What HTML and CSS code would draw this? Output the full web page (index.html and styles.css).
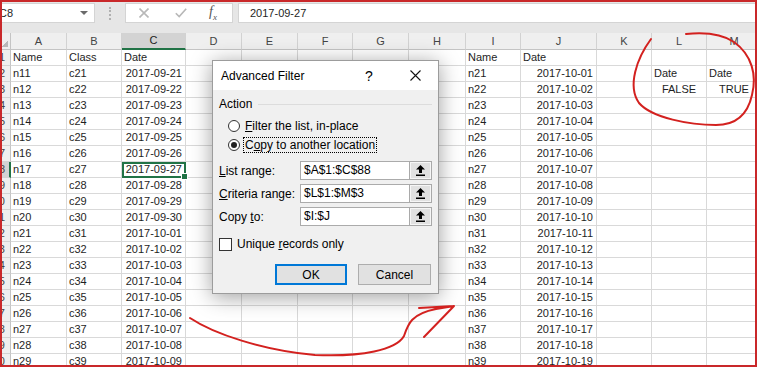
FILE: index.html
```html
<!doctype html>
<html lang="en">
<head>
<meta charset="utf-8">
<title>Advanced Filter</title>
<link rel="stylesheet" href="styles.css">
</head>
<body>
<div class="screen">

	<div class="formula-bar">
		<div class="name-box"><span class="name-text">C8</span><span class="caret"></span></div>
		<div class="grip"></div>
		<div class="fx-box">
			<svg class="fx-x" width="10" height="10" viewBox="0 0 10 10"><path d="M0.5 0.5 L9.5 9.5 M9.5 0.5 L0.5 9.5" stroke="#b8b8b8" stroke-width="1.6" fill="none"/></svg>
			<svg class="fx-ok" width="12" height="10" viewBox="0 0 12 10"><path d="M0.8 5.2 L4.2 8.6 L11.2 0.8" stroke="#b8b8b8" stroke-width="1.6" fill="none"/></svg>
			<span class="fx">f<sub>x</sub></span>
		</div>
		<div class="formula-input">2017-09-27</div>
	</div>

	<table class="sheet">
		<colgroup>
			<col class="w-rh"><col class="w-a"><col class="w-b"><col class="w-c"><col class="w-d"><col class="w-e"><col class="w-f">
			<col class="w-g"><col class="w-h"><col class="w-i"><col class="w-j"><col class="w-k"><col class="w-l"><col class="w-m">
		</colgroup>
		<tr class="col-head">
			<th class="corner"></th><th>A</th><th>B</th><th class="sel">C</th><th>D</th><th>E</th><th>F</th>
			<th>G</th><th>H</th><th>I</th><th>J</th><th>K</th><th>L</th><th>M</th>
		</tr>
		<tr><td class="rh">1</td><td>Name</td><td>Class</td><td>Date</td><td></td><td></td><td></td><td></td><td></td><td>Name</td><td>Date</td><td></td><td></td><td></td></tr>
		<tr><td class="rh">2</td><td>n11</td><td>c21</td><td class="d">2017-09-21</td><td></td><td></td><td></td><td></td><td></td><td>n21</td><td class="d">2017-10-01</td><td></td><td>Date</td><td>Date</td></tr>
		<tr><td class="rh">3</td><td>n12</td><td>c22</td><td class="d">2017-09-22</td><td></td><td></td><td></td><td></td><td></td><td>n22</td><td class="d">2017-10-02</td><td></td><td class="b">FALSE</td><td class="b">TRUE</td></tr>
		<tr><td class="rh">4</td><td>n13</td><td>c23</td><td class="d">2017-09-23</td><td></td><td></td><td></td><td></td><td></td><td>n23</td><td class="d">2017-10-03</td><td></td><td></td><td></td></tr>
		<tr><td class="rh">5</td><td>n14</td><td>c24</td><td class="d">2017-09-24</td><td></td><td></td><td></td><td></td><td></td><td>n24</td><td class="d">2017-10-04</td><td></td><td></td><td></td></tr>
		<tr><td class="rh">6</td><td>n15</td><td>c25</td><td class="d">2017-09-25</td><td></td><td></td><td></td><td></td><td></td><td>n25</td><td class="d">2017-10-05</td><td></td><td></td><td></td></tr>
		<tr><td class="rh">7</td><td>n16</td><td>c26</td><td class="d">2017-09-26</td><td></td><td></td><td></td><td></td><td></td><td>n26</td><td class="d">2017-10-06</td><td></td><td></td><td></td></tr>
		<tr><td class="rh sel">8</td><td>n17</td><td>c27</td><td class="d active">2017-09-27</td><td></td><td></td><td></td><td></td><td></td><td>n27</td><td class="d">2017-10-07</td><td></td><td></td><td></td></tr>
		<tr><td class="rh">9</td><td>n18</td><td>c28</td><td class="d">2017-09-28</td><td></td><td></td><td></td><td></td><td></td><td>n28</td><td class="d">2017-10-08</td><td></td><td></td><td></td></tr>
		<tr><td class="rh">10</td><td>n19</td><td>c29</td><td class="d">2017-09-29</td><td></td><td></td><td></td><td></td><td></td><td>n29</td><td class="d">2017-10-09</td><td></td><td></td><td></td></tr>
		<tr><td class="rh">11</td><td>n20</td><td>c30</td><td class="d">2017-09-30</td><td></td><td></td><td></td><td></td><td></td><td>n30</td><td class="d">2017-10-10</td><td></td><td></td><td></td></tr>
		<tr><td class="rh">12</td><td>n21</td><td>c31</td><td class="d">2017-10-01</td><td></td><td></td><td></td><td></td><td></td><td>n31</td><td class="d">2017-10-11</td><td></td><td></td><td></td></tr>
		<tr><td class="rh">13</td><td>n22</td><td>c32</td><td class="d">2017-10-02</td><td></td><td></td><td></td><td></td><td></td><td>n32</td><td class="d">2017-10-12</td><td></td><td></td><td></td></tr>
		<tr><td class="rh">14</td><td>n23</td><td>c33</td><td class="d">2017-10-03</td><td></td><td></td><td></td><td></td><td></td><td>n33</td><td class="d">2017-10-13</td><td></td><td></td><td></td></tr>
		<tr><td class="rh">15</td><td>n24</td><td>c34</td><td class="d">2017-10-04</td><td></td><td></td><td></td><td></td><td></td><td>n34</td><td class="d">2017-10-14</td><td></td><td></td><td></td></tr>
		<tr><td class="rh">16</td><td>n25</td><td>c35</td><td class="d">2017-10-05</td><td></td><td></td><td></td><td></td><td></td><td>n35</td><td class="d">2017-10-15</td><td></td><td></td><td></td></tr>
		<tr><td class="rh">17</td><td>n26</td><td>c36</td><td class="d">2017-10-06</td><td></td><td></td><td></td><td></td><td></td><td>n36</td><td class="d">2017-10-16</td><td></td><td></td><td></td></tr>
		<tr><td class="rh">18</td><td>n27</td><td>c37</td><td class="d">2017-10-07</td><td></td><td></td><td></td><td></td><td></td><td>n37</td><td class="d">2017-10-17</td><td></td><td></td><td></td></tr>
		<tr><td class="rh">19</td><td>n28</td><td>c38</td><td class="d">2017-10-08</td><td></td><td></td><td></td><td></td><td></td><td>n38</td><td class="d">2017-10-18</td><td></td><td></td><td></td></tr>
		<tr><td class="rh">20</td><td>n29</td><td>c39</td><td class="d">2017-10-09</td><td></td><td></td><td></td><td></td><td></td><td>n39</td><td class="d">2017-10-19</td><td></td><td></td><td></td></tr>
	</table>

	<div class="dialog">
		<div class="dlg-title">
			<span class="dlg-caption">Advanced Filter</span>
			<span class="dlg-help">?</span>
			<span class="dlg-close"><svg width="11" height="11" viewBox="0 0 11 11"><path d="M0.5 0.5 L10.5 10.5 M10.5 0.5 L0.5 10.5" stroke="#111" stroke-width="1.1" fill="none"/></svg></span>
		</div>
		<div class="dlg-body">
			<div class="group-head"><span>Action</span><span class="group-rule"></span></div>
			<div class="radio"><span class="radio-dot"></span><span><u>F</u>ilter the list, in-place</span></div>
			<div class="radio checked"><span class="radio-dot"></span><span class="focus">C<u>o</u>py to another location</span></div>

			<div class="fields">
				<div class="field">
					<span class="field-label"><u>L</u>ist range:</span>
					<span class="field-input">$A$1:$C$88</span>
					<span class="field-btn"><svg width="9" height="11" viewBox="0 0 9 11"><path d="M4.5 0 L9 4.6 H6 V8 H3 V4.6 H0 Z M0 9.4 H9 V11 H0 Z" fill="#000"/></svg></span>
				</div>
				<div class="field">
					<span class="field-label"><u>C</u>riteria range:</span>
					<span class="field-input">$L$1:$M$3</span>
					<span class="field-btn"><svg width="9" height="11" viewBox="0 0 9 11"><path d="M4.5 0 L9 4.6 H6 V8 H3 V4.6 H0 Z M0 9.4 H9 V11 H0 Z" fill="#000"/></svg></span>
				</div>
				<div class="field">
					<span class="field-label">Copy <u>t</u>o:</span>
					<span class="field-input">$I:$J</span>
					<span class="field-btn"><svg width="9" height="11" viewBox="0 0 9 11"><path d="M4.5 0 L9 4.6 H6 V8 H3 V4.6 H0 Z M0 9.4 H9 V11 H0 Z" fill="#000"/></svg></span>
				</div>
			</div>

			<div class="check"><span class="check-box"></span><span>Unique <u>r</u>ecords only</span></div>

			<div class="dlg-buttons">
				<span class="btn btn-default">OK</span>
				<span class="btn">Cancel</span>
			</div>
		</div>
	</div>

	<svg class="ink" width="757" height="367" viewBox="0 0 757 367">
		<path d="M651 39 C637 58 627 86 639 103 C652 118 690 125 716 125 C738 125 748 113 752 95 C757 75 752 55 734 42 C722 34 705 32 686 34" />
		<path d="M190 318 C214 334 262 350 315 355 C362 357 396 350 404 336 C408 324 411 314 436 309 L454 306 M419 308 L454 306 L424 337" />
	</svg>

	<div class="frame"></div>
</div>
</body>
</html>
```

FILE: styles.css
```css
* { margin: 0; padding: 0; box-sizing: border-box; }
html, body { width: 757px; height: 367px; overflow: hidden; }
body {
	font-family: "Liberation Sans", Arial, sans-serif;
	font-size: 11px;
	color: #1e1e1e;
	background: #fff;
}

.screen {
	position: relative;
	width: 757px; height: 367px;
	overflow: hidden;
}

/* formula bar */
.formula-bar {
	height: 33px;
	background: #e6e6e6;
	display: flex;
	align-items: flex-start;
	padding-top: 3px;
}
.name-box {
	width: 95px; height: 20px;
	background: #fff;
	border: 1px solid #d4d4d4;
	border-left: none;
	display: flex;
	align-items: center;
	justify-content: space-between;
	padding-right: 6px;
}
.name-text { margin-left: -1px; }
.caret {
	width: 0; height: 0;
	border-left: 4px solid transparent;
	border-right: 4px solid transparent;
	border-top: 4px solid #6a6a6a;
}
.grip {
	width: 2px; height: 13px;
	margin: 4px 14px 0 14px;
	border-left: 2px dotted #b0b0b0;
}
.fx-box {
	width: 108px; height: 20px;
	background: #fff;
	border: 1px solid #d4d4d4;
	display: flex;
	align-items: center;
	padding-left: 13px;
}
.fx-ok { margin-left: 26px; }
.fx {
	margin-left: 22px;
	font-family: "Liberation Serif", serif;
	font-style: italic;
	font-size: 14px;
	color: #555;
}
.fx sub { font-size: 9px; }
.formula-input {
	flex: 1;
	height: 20px;
	margin-left: 5px;
	background: #fff;
	border: 1px solid #d4d4d4;
	border-right: none;
	padding-left: 11px;
	line-height: 18px;
}

/* sheet */
.sheet {
	border-collapse: separate;
	border-spacing: 0;
	table-layout: fixed;
	width: 762px;
}
.w-rh { width: 11px; }
.w-a { width: 56px; }
.w-b { width: 55px; }
.w-c { width: 64px; }
.w-d { width: 56px; }
.w-e { width: 56px; }
.w-f { width: 55px; }
.w-g { width: 56px; }
.w-h { width: 57px; }
.w-i { width: 55px; }
.w-j { width: 76px; }
.w-k { width: 55px; }
.w-l { width: 55px; }
.w-m { width: 55px; }

.sheet tr { height: 16px; }
.sheet td, .sheet th {
	height: 16px;
	padding: 0 2px;
	border-right: 1px solid #d9d9d9;
	border-bottom: 1px solid #d9d9d9;
	white-space: nowrap;
	overflow: hidden;
	line-height: 15px;
	font-weight: normal;
	text-align: left;
}
.sheet td.d { text-align: right; padding-right: 3px; }
.sheet td.b { text-align: center; }

.col-head th {
	background: #efefef;
	color: #444;
	text-align: center;
	border-right-color: #d2d2d2;
	border-bottom-color: #c4c4c4;
}
.col-head th.sel {
	background: #d3d3d3;
	color: #222;
	border-bottom: 2px solid #217346;
}
.col-head th.corner {
	background: #efefef linear-gradient(135deg, transparent 50%, #b8b8b8 50%) no-repeat right 2px bottom 2px / 6px 6px;
	border-right-color: #c4c4c4;
}
.sheet td.rh {
	background: #efefef;
	color: #444;
	direction: rtl;
	padding: 0 6px 0 0;
	border-right-color: #c4c4c4;
	border-bottom-color: #d2d2d2;
}
.sheet td.rh.sel {
	background: #d3d3d3;
	border-right: 2px solid #217346;
}
.sheet td.active {
	position: relative;
	overflow: visible;
	outline: 2px solid #217346;
	outline-offset: -2px;
}
.sheet td.active::after {
	content: "";
	position: absolute;
	right: -3px; bottom: -3px;
	width: 5px; height: 5px;
	background: #217346;
	border: 1px solid #fff;
}

/* dialog */
.dialog {
	position: absolute;
	left: 212px; top: 60px;
	width: 227px; height: 234px;
	border: 1px solid #9c9c9c;
	background: #f0f0f0;
	box-shadow: 0 3px 20px rgba(0,0,0,0.38);
	font-size: 12px;
	color: #000;
}
.dlg-title {
	height: 29px;
	background: #fff;
	display: flex;
	align-items: center;
}
.dlg-caption { flex: 1; padding-left: 8px; }
.dlg-help, .dlg-close {
	width: 46px; height: 29px;
	display: flex;
	align-items: center;
	justify-content: center;
}
.dlg-help { font-size: 14px; }

.dlg-body { padding: 6px 6px 9px; }

.group-head {
	height: 16px;
	display: flex;
	align-items: center;
	gap: 6px;
	margin-bottom: 4px;
}
.group-rule { flex: 1; border-top: 1px solid #dcdcdc; }

.radio {
	height: 19px;
	display: flex;
	align-items: center;
	padding-left: 9px;
	gap: 5px;
}
.radio-dot {
	width: 12px; height: 12px;
	border: 1px solid #333;
	border-radius: 50%;
	background: #fff;
	display: flex;
	align-items: center;
	justify-content: center;
}
.radio.checked .radio-dot::after {
	content: "";
	width: 6px; height: 6px;
	border-radius: 50%;
	background: #222;
}
.focus {
	margin-left: -1px;
	padding: 0 1px;
	outline: 1px dotted #000;
	line-height: 14px;
}

.fields {
	margin-top: 7px;
	display: flex;
	flex-direction: column;
	gap: 4px;
}
.field {
	height: 19px;
	display: flex;
	align-items: center;
}
.field-label { width: 81px; }
.field-input {
	flex: 1;
	height: 19px;
	background: #fff;
	border: 1px solid #ababab;
	border-right: none;
	padding-left: 3px;
	line-height: 17px;
}
.field-btn {
	width: 23px; height: 19px;
	background: #e1e1e1;
	border: 1px solid #a9a9a9;
	box-shadow: inset 0 0 0 1px #f6f6f6;
	display: flex;
	align-items: center;
	justify-content: center;
}

.check {
	height: 16px;
	margin-top: 10px;
	display: flex;
	align-items: center;
	gap: 5px;
}
.check-box {
	width: 13px; height: 13px;
	border: 1px solid #333;
	background: #fff;
}

.dlg-buttons {
	margin-top: 12px;
	display: flex;
	justify-content: flex-end;
	gap: 11px;
	padding-right: 1px;
}
.btn {
	width: 73px; height: 21px;
	background: #e1e1e1;
	border: 1px solid #adadad;
	display: flex;
	align-items: center;
	justify-content: center;
}
.btn-default {
	width: 72px;
	border: 2px solid #0078d7;
}

/* red pen marks over the screenshot */
.ink {
	position: absolute;
	top: 0; left: 0;
	pointer-events: none;
}
.ink path {
	fill: none;
	stroke: #d3211f;
	stroke-width: 2;
	stroke-linecap: round;
	stroke-linejoin: round;
}

.frame {
	position: absolute;
	top: 0; left: 0; right: 0; bottom: 0;
	border: 2px solid #c9282a;
	pointer-events: none;
}
```
